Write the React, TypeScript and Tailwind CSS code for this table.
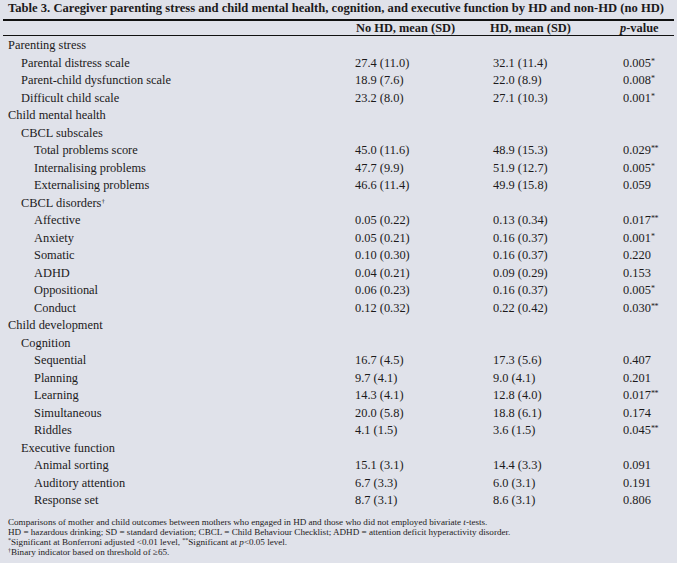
import * as React from "react"

type Row = {
  label: string
  level: number
  noHd?: string
  hd?: string
  p?: string
  star?: string
  dagger?: boolean
}

const rows: Row[] = [
  { label: "Parenting stress", level: 0 },
  { label: "Parental distress scale", level: 1, noHd: "27.4 (11.0)", hd: "32.1 (11.4)", p: "0.005", star: "*" },
  { label: "Parent-child dysfunction scale", level: 1, noHd: "18.9 (7.6)", hd: "22.0 (8.9)", p: "0.008", star: "*" },
  { label: "Difficult child scale", level: 1, noHd: "23.2 (8.0)", hd: "27.1 (10.3)", p: "0.001", star: "*" },
  { label: "Child mental health", level: 0 },
  { label: "CBCL subscales", level: 1 },
  { label: "Total problems score", level: 2, noHd: "45.0 (11.6)", hd: "48.9 (15.3)", p: "0.029", star: "**" },
  { label: "Internalising problems", level: 2, noHd: "47.7 (9.9)", hd: "51.9 (12.7)", p: "0.005", star: "*" },
  { label: "Externalising problems", level: 2, noHd: "46.6 (11.4)", hd: "49.9 (15.8)", p: "0.059" },
  { label: "CBCL disorders", level: 1, dagger: true },
  { label: "Affective", level: 2, noHd: "0.05 (0.22)", hd: "0.13 (0.34)", p: "0.017", star: "**" },
  { label: "Anxiety", level: 2, noHd: "0.05 (0.21)", hd: "0.16 (0.37)", p: "0.001", star: "*" },
  { label: "Somatic", level: 2, noHd: "0.10 (0.30)", hd: "0.16 (0.37)", p: "0.220" },
  { label: "ADHD", level: 2, noHd: "0.04 (0.21)", hd: "0.09 (0.29)", p: "0.153" },
  { label: "Oppositional", level: 2, noHd: "0.06 (0.23)", hd: "0.16 (0.37)", p: "0.005", star: "*" },
  { label: "Conduct", level: 2, noHd: "0.12 (0.32)", hd: "0.22 (0.42)", p: "0.030", star: "**" },
  { label: "Child development", level: 0 },
  { label: "Cognition", level: 1 },
  { label: "Sequential", level: 2, noHd: "16.7 (4.5)", hd: "17.3 (5.6)", p: "0.407" },
  { label: "Planning", level: 2, noHd: "9.7 (4.1)", hd: "9.0 (4.1)", p: "0.201" },
  { label: "Learning", level: 2, noHd: "14.3 (4.1)", hd: "12.8 (4.0)", p: "0.017", star: "**" },
  { label: "Simultaneous", level: 2, noHd: "20.0 (5.8)", hd: "18.8 (6.1)", p: "0.174" },
  { label: "Riddles", level: 2, noHd: "4.1 (1.5)", hd: "3.6 (1.5)", p: "0.045", star: "**" },
  { label: "Executive function", level: 1 },
  { label: "Animal sorting", level: 2, noHd: "15.1 (3.1)", hd: "14.4 (3.3)", p: "0.091" },
  { label: "Auditory attention", level: 2, noHd: "6.7 (3.3)", hd: "6.0 (3.1)", p: "0.191" },
  { label: "Response set", level: 2, noHd: "8.7 (3.1)", hd: "8.6 (3.1)", p: "0.806" },
]

const indent = ["pl-[5px]", "pl-[18px]", "pl-[31px]"]

export default function App() {
  return (
    <div
      className="w-[677px] h-[563px] overflow-hidden bg-[#e0e2ea] text-[#1c1a1b]"
      style={{ fontFamily: '"Liberation Serif", "DejaVu Serif", serif' }}
    >
      <div className="mx-[3px]">
        {/* Titel */}
        <div className="h-[21px] border-b-2 border-[#111] pl-[5px] text-[12.6px] leading-[16px] font-bold whitespace-nowrap">
          Table 3. Caregiver parenting stress and child mental health, cognition, and executive function by HD and non-HD (no HD)
        </div>

        {/* Kopfzeile */}
        <div className="grid grid-cols-[352px_135px_130px_1fr] h-[15px] border-b border-[#111] text-[12.4px] leading-[14px] font-bold items-center">
          <div />
          <div className="pl-[1px]">No HD, mean (SD)</div>
          <div>HD, mean (SD)</div>
          <div>
            <span className="italic">p</span>-value
          </div>
        </div>

        {/* Tabellenkörper */}
        <div className="pt-[1px] text-[12.4px]">
          {rows.map((r, i) => (
            <div key={i} className="grid grid-cols-[352px_135px_130px_1fr] h-[17.5px] items-center leading-[15px] whitespace-nowrap">
              <div className={indent[r.level]}>
                {r.label}
                {r.dagger && <sup className="text-[7px] top-[-4px]">†</sup>}
              </div>
              <div>{r.noHd}</div>
              <div className="pl-[3px]">{r.hd}</div>
              <div className="pl-[3px]">
                {r.p}
                {r.star && <sup className="text-[8px] top-[-3px] tracking-[-0.5px]">{r.star}</sup>}
              </div>
            </div>
          ))}
        </div>

        {/* Fußnoten */}
        <div className="mt-[7px] pl-[5px] text-[9.1px] leading-[10px] whitespace-nowrap">
          <div>
            Comparisons of mother and child outcomes between mothers who engaged in HD and those who did not employed bivariate <span className="italic">t</span>-tests.
          </div>
          <div>HD = hazardous drinking; SD = standard deviation; CBCL = Child Behaviour Checklist; ADHD = attention deficit hyperactivity disorder.</div>
          <div>
            <sup className="text-[6px] top-[-3px]">*</sup>Significant at Bonferroni adjusted &lt;0.01 level, <sup className="text-[6px] top-[-3px]">**</sup>Significant at <span className="italic">p</span>&lt;0.05 level.
          </div>
          <div>
            <sup className="text-[6px] top-[-3px]">†</sup>Binary indicator based on threshold of ≥65.
          </div>
        </div>
      </div>
    </div>
  )
}
